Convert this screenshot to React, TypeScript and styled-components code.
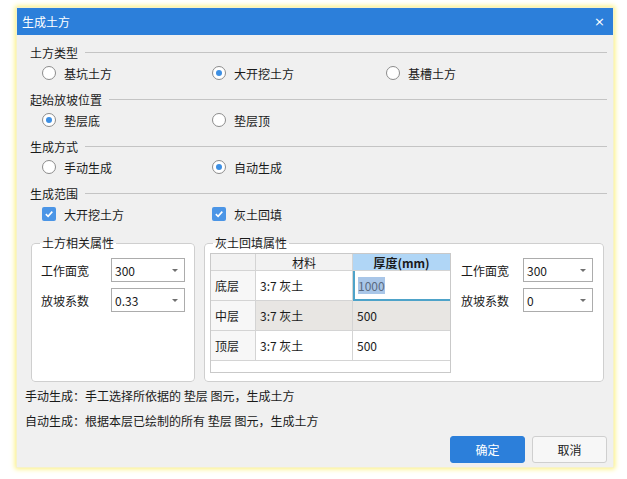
import React from "react";
import styled, { createGlobalStyle } from "styled-components";

const Global = createGlobalStyle`
  html, body { margin: 0; padding: 0; background: #ffffff; }
  body { font-family: "Noto Sans CJK SC", "Noto Sans", sans-serif; font-size: 12px; color: #1a1a1a; }
  * { box-sizing: border-box; }
`;

const Page = styled.div`
  width: 627px;
  height: 479px;
  padding: 8px 14px 12px 17px;
  background: #ffffff;
`;

const Dialog = styled.div`
  width: 596px;
  height: 459px;
  display: flex;
  flex-direction: column;
  background: #f0f0f0;
  box-shadow: 0 0 0 1px #f6f2c8, 0 0 5px 2px #fbf07a;
`;

const TitleBar = styled.div`
  height: 27px;
  flex: none;
  display: flex;
  align-items: center;
  justify-content: space-between;
  padding: 0 8px 0 5px;
  background: #2c7fda;
  color: #ffffff;
  font-size: 12px;
`;

const Close = styled.span`
  font-family: "DejaVu Sans", sans-serif;
  font-size: 13px;
  line-height: 1;
`;

const Body = styled.div`
  flex: 1;
  display: flex;
  flex-direction: column;
  padding: 8px 6px 0 8px;
`;

const Section = styled.div`
  display: flex;
  flex-direction: column;
  gap: 3px;
  margin: 0 0 8px 5px;
`;

const Header = styled.div`
  height: 18px;
  display: flex;
  align-items: center;
  gap: 7px;
  &::after {
    content: "";
    flex: 1;
    height: 1px;
    background: #c4c4c4;
  }
`;

const OptionRow = styled.div`
  height: 18px;
  display: grid;
  grid-template-columns: 170px 174px 1fr;
  padding-left: 12px;
  align-items: center;
`;

const Option = styled.label`
  display: flex;
  align-items: center;
  gap: 8px;
`;

const RadioMark = styled.span<{ $on?: boolean }>`
  width: 14px;
  height: 14px;
  border-radius: 50%;
  border: 1px solid #8c8c8c;
  background: #ffffff;
  display: flex;
  align-items: center;
  justify-content: center;
  &::after {
    content: "";
    width: 6px;
    height: 6px;
    border-radius: 50%;
    background: ${(p) => (p.$on ? "#3d8fe3" : "transparent")};
  }
`;

const CheckMark = styled.span`
  width: 14px;
  height: 14px;
  border-radius: 2px;
  background: #4b95e6;
  display: flex;
  align-items: center;
  justify-content: center;
`;

const Groups = styled.div`
  display: flex;
  gap: 9px;
  margin: 4px 3px 0 6px;
`;

const Group = styled.fieldset<{ $w: number }>`
  width: ${(p) => p.$w}px;
  height: 147px;
  margin: 0;
  padding: 2px 9px 0 9px;
  border: 1px solid #cfcfcf;
  border-radius: 4px;
  background: #ffffff;
  display: flex;
  gap: 10px;
`;

const Legend = styled.legend`
  margin-left: -1px;
  padding: 0 2px;
  font-size: 12px;
  line-height: 16px;
  color: #1a1a1a;
`;

const PropList = styled.div<{ $labelW: number }>`
  display: grid;
  grid-template-columns: ${(p) => p.$labelW}px 1fr;
  row-gap: 6px;
  align-content: start;
  align-items: center;
  padding-top: 5px;
`;

const Combo = styled.div<{ $w: number }>`
  width: ${(p) => p.$w}px;
  height: 24px;
  border: 1px solid #acacac;
  background: #ffffff;
  display: flex;
  align-items: center;
  justify-content: space-between;
  padding: 0 6px 0 3px;
  font-size: 12px;
`;

const Arrow = styled.span`
  width: 0;
  height: 0;
  border-left: 3px solid transparent;
  border-right: 3px solid transparent;
  border-top: 3px solid #707070;
`;

const Table = styled.div`
  width: 241px;
  height: 120px;
  margin-left: -4px;
  border: 1px solid #c9c9c9;
  background: #ffffff;
  display: grid;
  grid-template-columns: 45px 97px 1fr;
  grid-template-rows: 17px 30px 30px 30px;
  align-content: start;
`;

const Cell = styled.div<{ $kind?: "corner" | "head" | "headSel" | "rowHead" | "body" | "alt" | "focus" }>`
  display: flex;
  align-items: center;
  padding-left: 4px;
  border-right: 1px solid #d4d4d4;
  border-bottom: 1px solid #d4d4d4;
  font-size: 12px;
  background: ${(p) =>
    p.$kind === "corner" || p.$kind === "head"
      ? "#f2f2f2"
      : p.$kind === "headSel"
      ? "#b0d6f6"
      : p.$kind === "rowHead"
      ? "#f7f7f7"
      : p.$kind === "alt"
      ? "#e8e6e3"
      : "#ffffff"};
  ${(p) => (p.$kind === "head" || p.$kind === "headSel" ? "justify-content: center; padding-left: 0;" : "")}
  ${(p) => (p.$kind === "headSel" ? "font-weight: bold;" : "")}
  ${(p) => (p.$kind === "focus" ? "border: 2px solid #4ea3c9; border-top: none; padding-left: 3px;" : "")}
  &:nth-child(3n) { border-right: none; }
`;

const Selected = styled.span`
  background: #a9c6e8;
  color: #5a6a80;
`;

const Note = styled.div`
  height: 25px;
  display: flex;
  align-items: center;
`;

const Notes = styled.div`
  display: flex;
  flex-direction: column;
  margin-top: 1px;
`;

const Footer = styled.div`
  display: flex;
  justify-content: flex-end;
  gap: 7px;
  margin-top: 3px;
`;

const Button = styled.button<{ $primary?: boolean }>`
  width: 75px;
  height: 27px;
  border-radius: 3px;
  font-family: "Noto Sans CJK SC", sans-serif;
  font-size: 12px;
  border: 1px solid ${(p) => (p.$primary ? "#2c7fda" : "#cfcfcf")};
  background: ${(p) => (p.$primary ? "#2c7fda" : "#f7f7f7")};
  color: ${(p) => (p.$primary ? "#ffffff" : "#1a1a1a")};
`;

const Radio = ({ on, label }: { on?: boolean; label: string }) => (
  <Option>
    <RadioMark $on={on} />
    {label}
  </Option>
);

const Check = ({ label }: { label: string }) => (
  <Option>
    <CheckMark>
      <svg width="10" height="10" viewBox="0 0 10 10">
        <path d="M1.8 5.2 L4.1 7.4 L8.3 2.6" fill="none" stroke="#fff" strokeWidth="1.6" />
      </svg>
    </CheckMark>
    {label}
  </Option>
);

const ComboBox = ({ w, value }: { w: number; value: string }) => (
  <Combo $w={w}>
    {value}
    <Arrow />
  </Combo>
);

export default function App() {
  return (
    <Page>
      <Global />
      <Dialog>
        <TitleBar>
          <span>生成土方</span>
          <Close>×</Close>
        </TitleBar>
        <Body>
          <Section>
            <Header>土方类型</Header>
            <OptionRow>
              <Radio label="基坑土方" />
              <Radio on label="大开挖土方" />
              <Radio label="基槽土方" />
            </OptionRow>
          </Section>
          <Section>
            <Header>起始放坡位置</Header>
            <OptionRow>
              <Radio on label="垫层底" />
              <Radio label="垫层顶" />
            </OptionRow>
          </Section>
          <Section>
            <Header>生成方式</Header>
            <OptionRow>
              <Radio label="手动生成" />
              <Radio on label="自动生成" />
            </OptionRow>
          </Section>
          <Section>
            <Header>生成范围</Header>
            <OptionRow>
              <Check label="大开挖土方" />
              <Check label="灰土回填" />
            </OptionRow>
          </Section>
          <Groups>
            <Group $w={164}>
              <Legend>土方相关属性</Legend>
              <PropList $labelW={70}>
                <span>工作面宽</span>
                <ComboBox w={74} value="300" />
                <span>放坡系数</span>
                <ComboBox w={74} value="0.33" />
              </PropList>
            </Group>
            <Group $w={401}>
              <Legend>灰土回填属性</Legend>
              <Table>
                <Cell $kind="corner" />
                <Cell $kind="head">材料</Cell>
                <Cell $kind="headSel">厚度(mm)</Cell>
                <Cell $kind="rowHead">底层</Cell>
                <Cell>3:7 灰土</Cell>
                <Cell $kind="focus">
                  <Selected>1000</Selected>
                </Cell>
                <Cell $kind="rowHead">中层</Cell>
                <Cell $kind="alt">3:7 灰土</Cell>
                <Cell $kind="alt">500</Cell>
                <Cell $kind="rowHead">顶层</Cell>
                <Cell>3:7 灰土</Cell>
                <Cell>500</Cell>
              </Table>
              <PropList $labelW={62}>
                <span>工作面宽</span>
                <ComboBox w={70} value="300" />
                <span>放坡系数</span>
                <ComboBox w={70} value="0" />
              </PropList>
            </Group>
          </Groups>
          <Notes>
            <Note>手动生成：手工选择所依据的 垫层 图元，生成土方</Note>
            <Note>自动生成：根据本层已绘制的所有 垫层 图元，生成土方</Note>
          </Notes>
          <Footer>
            <Button $primary>确定</Button>
            <Button>取消</Button>
          </Footer>
        </Body>
      </Dialog>
    </Page>
  );
}
